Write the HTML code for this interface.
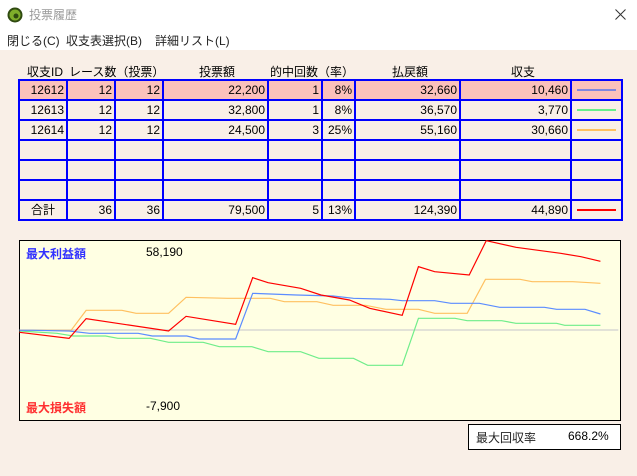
<html><head><style>
body{margin:0;width:637px;height:476px;background:#f9efe7;font-family:"Liberation Sans","Noto Sans CJK JP",sans-serif;font-size:12px;position:relative;overflow:hidden}
.top{position:absolute;left:0;top:0;width:637px;height:50px;background:#fff}
.a{position:absolute;white-space:nowrap}
table{position:absolute;left:18px;top:79px;border-collapse:collapse;table-layout:fixed;width:603px}
td{border:2px solid #0000ff;height:18px;padding:0 2px;text-align:right;font-size:12px;line-height:16px;box-sizing:border-box;overflow:hidden}
tr{height:20px}
tr.h td{background:#fbc1bb}
.ln{display:block;height:2px;margin:0 3px}
</style></head><body>
<div class="top"></div>
<svg class="a" style="left:7px;top:7px" width="16" height="16"><circle cx="8" cy="8" r="7.5" fill="#2f4a10"/><circle cx="8" cy="8" r="5.5" fill="#7fae2a"/><circle cx="9" cy="9" r="2.5" fill="#2f4a10"/></svg>
<div class="a" style="left:29px;top:6px;color:#999;font-size:12px">投票履歴</div>
<svg class="a" style="left:615px;top:9px" width="11" height="11"><path d="M0.5 0.5L10.5 10.5M10.5 0.5L0.5 10.5" stroke="#333" stroke-width="1"/></svg>
<div class="a" style="left:7px;top:32px;color:#222">閉じる(C)</div>
<div class="a" style="left:66px;top:32px;color:#222">収支表選択(B)</div>
<div class="a" style="left:155px;top:32px;color:#222">詳細リスト(L)</div>
<div class="a" style="left:27px;top:63px">収支ID</div>
<div class="a" style="left:69px;top:63px">レース数（投票）</div>
<div class="a" style="left:199px;top:63px">投票額</div>
<div class="a" style="left:270px;top:63px">的中回数（率）</div>
<div class="a" style="left:392px;top:63px">払戻額</div>
<div class="a" style="left:511px;top:63px">収支</div>
<table>
<colgroup><col style="width:48px"><col style="width:48px"><col style="width:48px"><col style="width:105px"><col style="width:54px"><col style="width:33px"><col style="width:105px"><col style="width:111px"><col style="width:51px"></colgroup>
<tr class="h"><td>12612</td><td>12</td><td>12</td><td>22,200</td><td>1</td><td>8%</td><td>32,660</td><td>10,460</td><td><span class="ln" style="background:#7f86e0"></span></td></tr>
<tr><td>12613</td><td>12</td><td>12</td><td>32,800</td><td>1</td><td>8%</td><td>36,570</td><td>3,770</td><td><span class="ln" style="background:#66f08a"></span></td></tr>
<tr><td>12614</td><td>12</td><td>12</td><td>24,500</td><td>3</td><td>25%</td><td>55,160</td><td>30,660</td><td><span class="ln" style="background:#ffc060"></span></td></tr>
<tr><td></td><td></td><td></td><td></td><td></td><td></td><td></td><td></td><td></td></tr>
<tr><td></td><td></td><td></td><td></td><td></td><td></td><td></td><td></td><td></td></tr>
<tr><td></td><td></td><td></td><td></td><td></td><td></td><td></td><td></td><td></td></tr>
<tr><td style="text-align:center">合計</td><td>36</td><td>36</td><td>79,500</td><td>5</td><td>13%</td><td>124,390</td><td>44,890</td><td><span class="ln" style="background:#ff0000"></span></td></tr>
</table>
<div class="a" style="left:19px;top:240px;width:600px;height:179px;border:1px solid #000;background:#ffffe3"></div>
<svg class="a" style="left:0;top:0" width="637" height="476" viewBox="0 0 1568 1428" preserveAspectRatio="none"><g fill="none" stroke-width="1.2" transform="translate(0,690)">
<line x1="48" y1="300" x2="1522" y2="300" stroke="#d0d0d0" vector-effect="non-scaling-stroke"/>
<polyline vector-effect="non-scaling-stroke" stroke="#6fed8a" points="48,303 140,310 180,318 260,318 290,325 370,325 415,337 500,337 540,350 620,350 660,365 740,365 785,385 870,385 905,406 990,406 1030,265 1120,265 1150,272 1235,272 1270,280 1370,280 1390,286 1478,286"/>
<polyline vector-effect="non-scaling-stroke" stroke="#ffc060" points="48,301 175,301 212,241 300,241 335,250 415,250 458,202 560,205 665,205 700,215 780,215 820,226 900,226 950,238 1030,238 1070,250 1150,250 1195,148 1280,148 1310,155 1410,155 1478,160"/>
<polyline vector-effect="non-scaling-stroke" stroke="#5b8cff" points="48,301 80,301 170,303 220,310 340,310 375,318 460,318 490,327 580,327 622,190 730,195 820,198 870,205 960,208 990,212 1070,212 1110,220 1180,220 1230,232 1340,232 1370,238 1440,238 1478,252"/>
<polyline vector-effect="non-scaling-stroke" stroke="#ff0000" points="48,307 170,325 212,266 415,303 458,259 580,283 622,143 660,158 740,175 790,195 860,210 910,235 990,256 1030,110 1070,125 1155,135 1197,32 1270,52 1380,70 1430,80 1478,94"/>
</g></svg>
<div class="a" style="left:26px;top:245px;color:#3030ff;font-weight:bold">最大利益額</div>
<div class="a" style="left:146px;top:245px">58,190</div>
<div class="a" style="left:26px;top:399px;color:#ff3030;font-weight:bold">最大損失額</div>
<div class="a" style="left:146px;top:399px">-7,900</div>
<div class="a" style="left:468px;top:424px;width:151px;height:24px;border:1px solid #000;background:#fff"></div>
<div class="a" style="left:476px;top:429px;color:#222">最大回収率</div>
<div class="a" style="left:568px;top:429px">668.2%</div>
</body></html>
